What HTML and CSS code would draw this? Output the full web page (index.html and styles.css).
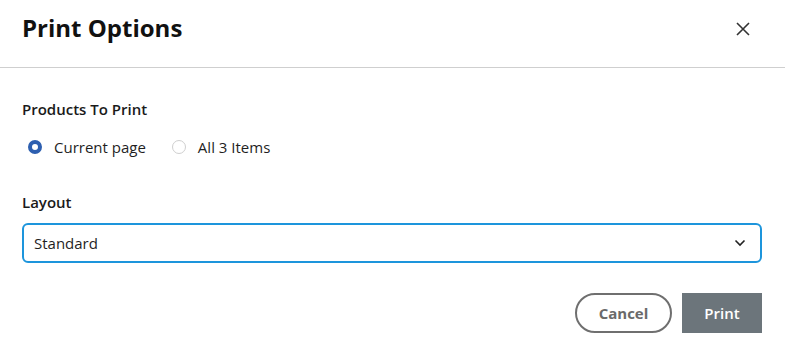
FILE: index.html
```html
<!DOCTYPE html>
<html lang="en">
<head>
<meta charset="UTF-8">
<meta name="viewport" content="width=device-width, initial-scale=1.0">
<link rel="stylesheet" href="styles.css">
</head>
<body>
    <div class="modal">
        <div class="modal-header">
            <h2>Print Options</h2>
            <button class="close-btn" aria-label="Close">
                <svg width="16" height="16" viewBox="0 0 16 16">
                    <path d="M2 2 L14 14 M14 2 L2 14" stroke="#333" stroke-width="1.6" fill="none"/>
                </svg>
            </button>
        </div>

        <div class="modal-body">
            <div class="field-label">Products To Print</div>
            <div class="radio-group">
                <label class="radio">
                    <input type="radio" name="scope" checked>
                    <span class="dot"></span>
                    Current page
                </label>
                <label class="radio">
                    <input type="radio" name="scope">
                    <span class="dot"></span>
                    All 3 Items
                </label>
            </div>

            <div class="field-label layout-label">Layout</div>
            <div class="select">
                <span>Standard</span>
                <svg width="12" height="8" viewBox="0 0 12 8">
                    <path d="M1.5 1.5 L6 6 L10.5 1.5" stroke="#222" stroke-width="1.6" fill="none"/>
                </svg>
            </div>

            <div class="actions">
                <button class="btn btn-cancel">Cancel</button>
                <button class="btn btn-print">Print</button>
            </div>
        </div>
    </div>
</body>
</html>
```

FILE: styles.css
```css
body {
    margin: 0;
    background-color: #fff;
    font-family: "Open Sans", Arial, sans-serif;
    color: #1a1a1a;
}

.modal {
    width: 785px;
}

.modal-header {
    display: flex;
    justify-content: space-between;
    align-items: flex-start;
    height: 68px;
    padding: 11px 34px 0 22px;
    border-bottom: 1px solid #cfcfcf;
    box-sizing: border-box;
}

.modal-header h2 {
    margin: 0;
    font-size: 24px;
    font-weight: 700;
    line-height: 33px;
    color: #111;
}

.close-btn {
    background: none;
    border: none;
    padding: 0;
    margin-top: 10px;
    cursor: pointer;
    display: flex;
}

.modal-body {
    padding: 31px 23px 0 22px;
}

.field-label {
    font-size: 15px;
    font-weight: 600;
    color: #1a1a1a;
}

.layout-label {
    margin-top: 35px;
}

.radio-group {
    display: flex;
    gap: 26px;
    margin-top: 18px;
    padding-left: 6px;
}

.radio {
    display: flex;
    align-items: center;
    gap: 12px;
    font-size: 15px;
    color: #1f1f1f;
    cursor: pointer;
}

.radio input {
    display: none;
}

.radio .dot {
    width: 14px;
    height: 14px;
    border-radius: 50%;
    border: 1px solid #cfcfcf;
    box-sizing: border-box;
}

.radio input:checked + .dot {
    border: 4px solid #2d5fb0;
    background-color: #fff;
}

.select {
    display: flex;
    justify-content: space-between;
    align-items: center;
    margin-top: 11px;
    height: 40px;
    padding: 0 14px 0 10px;
    border: 2px solid #1d95dc;
    border-radius: 6px;
    box-sizing: border-box;
    font-size: 15px;
    color: #1f1f1f;
}

.actions {
    display: flex;
    justify-content: flex-end;
    gap: 10px;
    margin-top: 30px;
}

.btn {
    font-family: "Open Sans", Arial, sans-serif;
    font-size: 15px;
    font-weight: 600;
    height: 40px;
    cursor: pointer;
}

.btn-cancel {
    width: 97px;
    background: #fff;
    border: 2px solid #6f6f6f;
    border-radius: 20px;
    color: #6a6a6a;
    font-weight: 700;
}

.btn-print {
    width: 80px;
    background-color: #6c757b;
    border: none;
    color: #fff;
}
```
